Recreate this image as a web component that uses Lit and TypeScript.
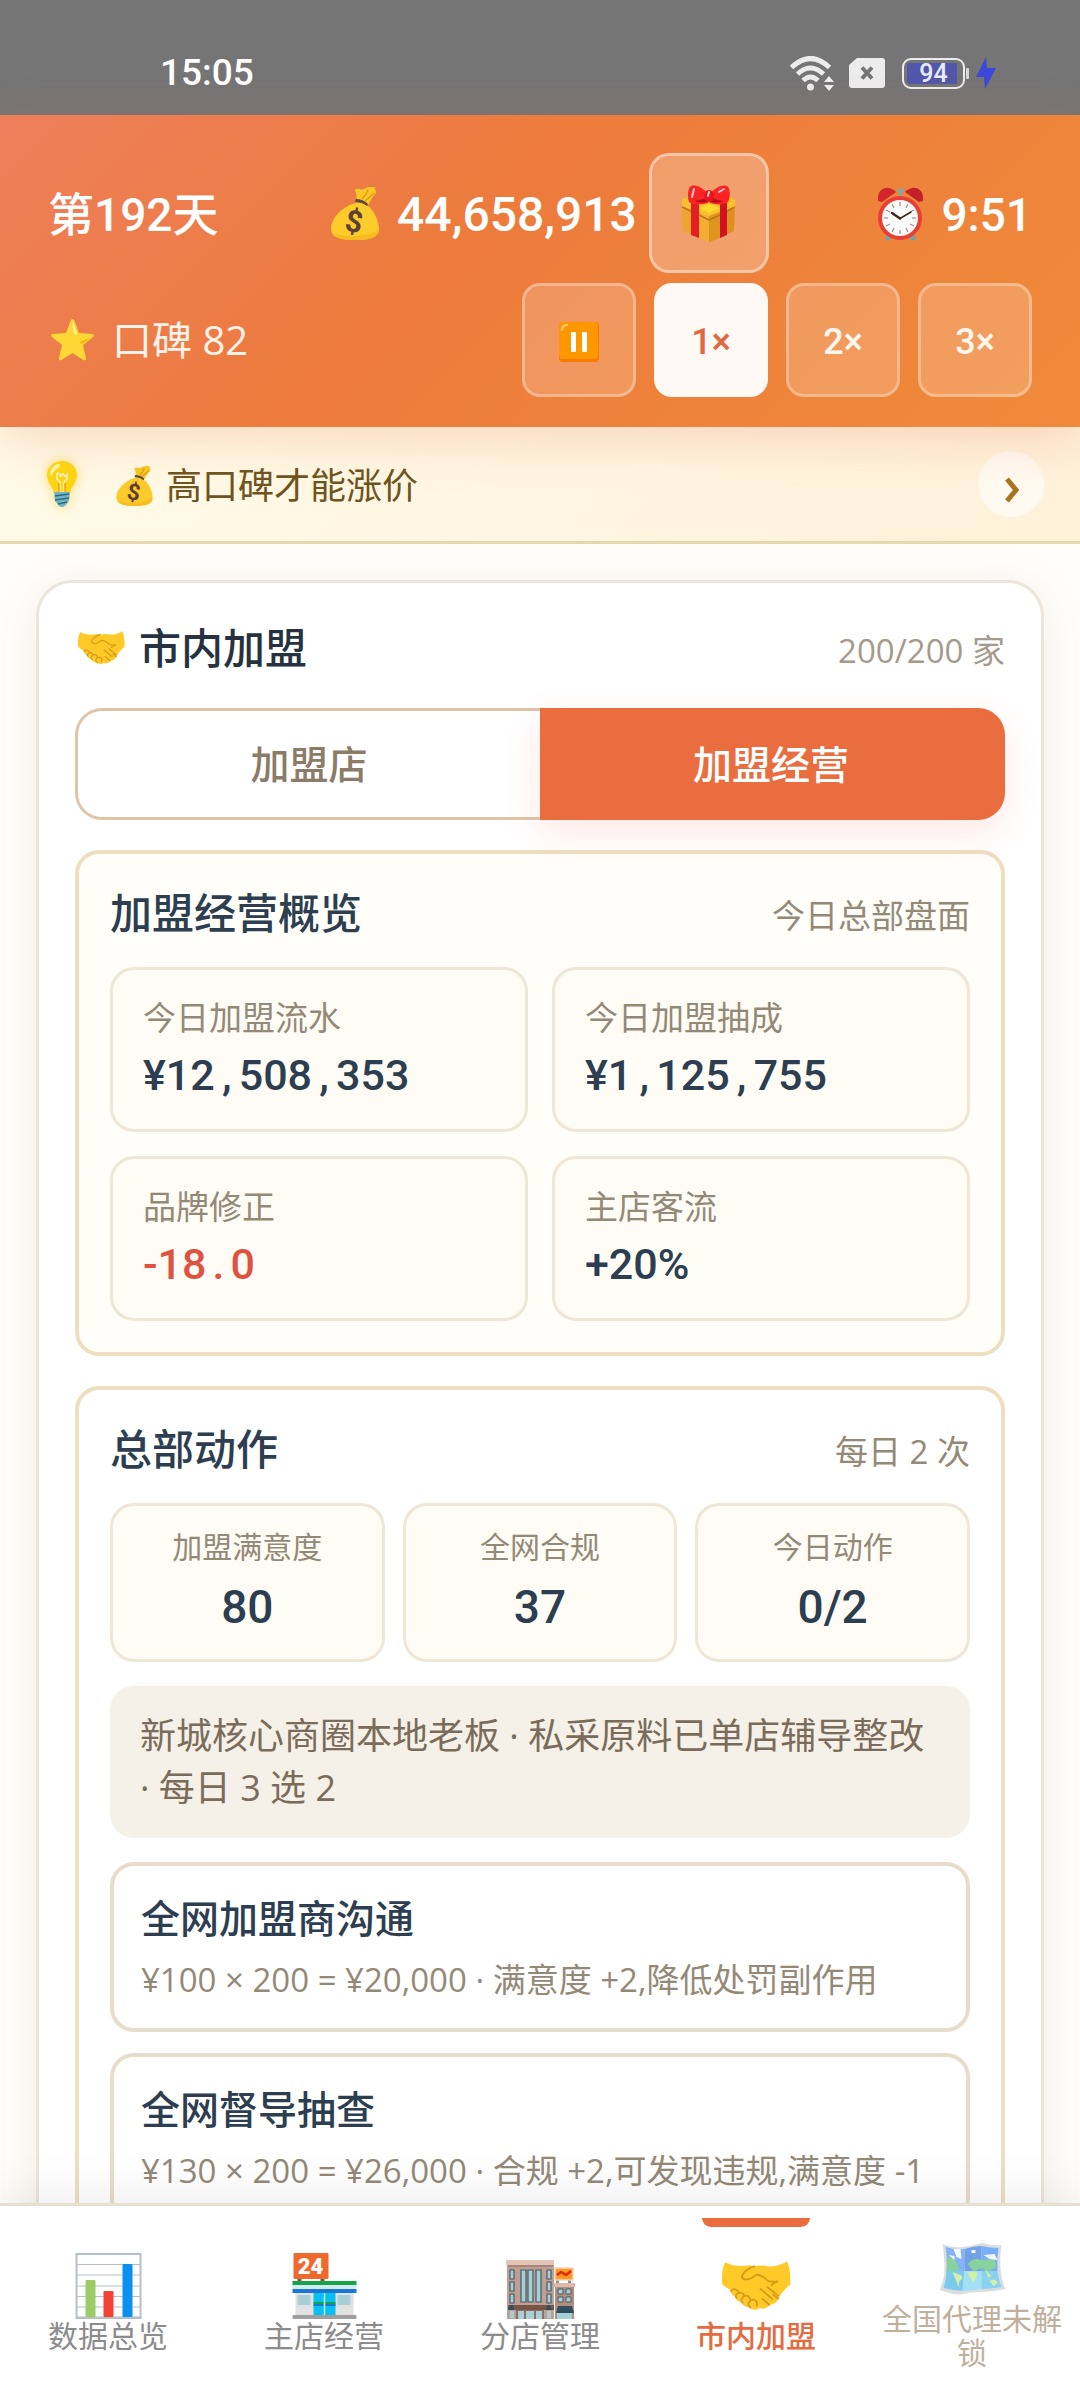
import { LitElement, html, css, TemplateResult } from "lit";
import { customElement, property, state } from "lit/decorators.js";
import { classMap } from "lit/directives/class-map.js";

/* ---------- pictograms ---------- */

const bag = html`<svg class="pic" viewBox="0 0 48 53" aria-hidden="true">
  <path d="M25 14C27 9 24 5 24 3C27 0 30 4 33 2C37-1 41 0 44 0C43 3 46 3 45 6C42 9 40 13 37 18Z" fill="#fcc624"/>
  <path d="M31 12C34 9 36 6 37 3M34 14C38 11 41 8 43 6" stroke="#d99f17" stroke-width="1.5" fill="none"/>
  <path d="M25 16C14 18 0 30 0 42C0 50 8 53 24 53C40 53 48 50 48 42C48 34 43 23 37 19C33 16 28 15 25 16Z" fill="#fdcb2a"/>
  <path d="M2 46C6 52 16 53 24 53C40 53 48 50 48 42C40 50 14 51 2 46Z" fill="#f7bd20"/>
  <path d="M25 12Q32 12 37 17L36 19Q31 15 24 15Z" fill="#5d4a3c"/>
  <text x="23" y="45" font-family="Roboto, sans-serif" font-size="30" font-weight="700" fill="#5d4037" text-anchor="middle" transform="rotate(10 23 35)">$</text>
</svg>`;

const gift = html`<svg class="pic" viewBox="0 0 53 57" aria-hidden="true">
  <path d="M0 21L27 31V57L1 46Z" fill="#eda52c"/>
  <path d="M53 21L27 31V57L52 46Z" fill="#dd911c"/>
  <path d="M17 24L27 29L38 24V53L27 57L17 53Z" fill="#f5ad33"/>
  <path d="M27 29L38 24V53L27 57Z" fill="#e0951e"/>
  <path d="M0 14L15 9H38L53 14V21L27 31L0 21Z" fill="#fbc02d"/>
  <path d="M17 23L27 19L38 23L27 28Z" fill="#fdd92b"/>
  <path d="M0 22L17 30L27 35L38 30L53 22" stroke="#b8741a" stroke-width="1.4" fill="none"/>
  <path d="M9 16L17 19V53L9 50Z" fill="#e31e26"/>
  <path d="M38 19L45 16V50L38 53Z" fill="#cf1226"/>
  <path d="M26 18C20 20 10 20 7 17C5 11 6 3 9 1C15-1 22 4 26 9Z" fill="#fb2323"/>
  <path d="M28 18C34 20 43 20 46 17C49 11 48 3 45 1C39-1 32 4 28 9Z" fill="#fb2323"/>
  <path d="M13 16C17 18 23 18 26 16V13ZM41 16C37 18 31 18 28 16V13Z" fill="#b70d1e"/>
  <ellipse cx="27" cy="11" rx="5" ry="6" fill="#e8151f"/>
  <path d="M10 12L12 4M37 7L42 4M26 11L27 7" stroke="#ffc9c9" stroke-width="2" stroke-linecap="round"/>
</svg>`;

const clock = html`<svg class="pic" viewBox="0 0 45 53" aria-hidden="true">
  <path d="M9 47L14 50L12 53H7ZM36 47L31 50L33 53H38Z" fill="#6fa3ac"/>
  <path d="M0 14C-1 4 5 0 11 1C15 2 17 4 18 5L4 15Z" fill="#d3242c"/>
  <path d="M45 14C46 4 40 0 34 1C30 2 28 4 27 5L41 15Z" fill="#c4202a"/>
  <rect x="19" y="2" width="7" height="3" rx="1" fill="#7fa8ae"/>
  <rect x="21" y="4" width="3" height="6" fill="#7fa8ae"/>
  <circle cx="22" cy="31" r="22" fill="#ea3d35"/>
  <circle cx="22" cy="31" r="18" fill="#fafafa"/>
  <path d="M22 15v4M22 43v4M6 31h4M34 31h4M14 17l2 4M30 17l-2 4M14 45l2-4M30 45l-2-4M8 23l4 2M36 23l-4 2M8 39l4-2M36 39l-4-2" stroke="#8d7b74" stroke-width="1"/>
  <path d="M14 26L22 31.500" stroke="#3e2723" stroke-width="2.400" stroke-linecap="round"/>
  <path d="M22 31.500L33 25" stroke="#3e2723" stroke-width="1.500" stroke-linecap="round"/>
</svg>`;

const star = html`<svg class="pic" viewBox="0 0 43 42" aria-hidden="true">
  <path d="M21.500 0C22.500 0 23 1 23.500 2L28 14L41 15C43 15 43.500 17 42 18L32 26L35 39C35.500 41 34 42 32.500 41L21.500 34L10.500 41C9 42 7.500 41 8 39L11 26L1 18C-.5 17 0 15 2 15L15 14L19.500 2C20 1 20.500 0 21.500 0Z" fill="#fdd835"/>
  <path d="M22 2L26 15L24 16C22 12 21 6 22 2Z" fill="#fff3a0"/>
  <path d="M29 23L40 18C36 21 32 25 30 25Z" fill="#f4b400"/>
</svg>`;

const pause = html`<svg class="pic" viewBox="0 0 40 40" aria-hidden="true">
  <rect width="40" height="40" rx="4" fill="#f57c00"/>
  <rect width="39" height="37" rx="4" fill="#ff9800"/>
  <path d="M3 8Q3 3 8 3" stroke="#ffcc80" stroke-width="2" fill="none" stroke-linecap="round"/>
  <rect x="12" y="10" width="5" height="20" rx="1" fill="#fff"/>
  <rect x="23" y="10" width="5" height="20" rx="1" fill="#fff"/>
</svg>`;

const bulb = html`<svg class="pic glow" viewBox="0 0 30 46" aria-hidden="true">
  <path d="M15 0C23 0 30 6 30 14C30 22 24 25 23 32H7C6 25 0 22 0 14C0 6 7 0 15 0Z" fill="#fdd612"/>
  <path d="M3 13C3 7 8 3 12 3C14 3 13 6 10 8C6 10 6 14 4 15Z" fill="#fff59d"/>
  <path d="M10 12V18L13 21V31M20 12V18L17 21V31M10 13Q12 11 13 14T15 14T17 14T20 13" stroke="#fff8d2" stroke-width="1.400" fill="none"/>
  <path d="M12 22V31M18 22V31" stroke="#ef8d12" stroke-width="1.200"/>
  <path d="M7 31H23L22 40L18 45Q15 47 12 45L8 40Z" fill="#6fb3c8"/>
  <path d="M8 35L22 33M8 39L22 37M11 43L20 41" stroke="#38687c" stroke-width="1.400"/>
</svg>`;

const handshake = html`<svg class="pic" viewBox="0 0 70 50" aria-hidden="true">
  <path d="M3 1C12 6 22 5 28 4C33 6 40 3 46 5C54 6 61 3 66 0C69 6 70 16 69 24C64 27 60 33 57 38C56 42 52 44 48 44C46 48 41 49 38 47C36 50 30 50 28 46C24 47 20 44 20 41C16 41 13 38 14 36C10 35 8 31 9 29C5 27 1 25 0 22C-1 14 1 6 3 1Z" fill="#ffca28"/>
  <g stroke="#d59a17" stroke-width="1.800" fill="none" stroke-linecap="round" stroke-linejoin="round">
    <path d="M33 5C28 6 21 11 20 16C23 20 29 19 34 14C39 12 43 17 47 20L56 21M50 24L56 20"/>
    <path d="M9 30C11 27 16 28 17 32C14 33 13 36 15 37M17 32C21 31 24 34 21 37C19 38 19 41 21 42M23 35C27 34 30 38 28 41C26 42 26 45 29 47M30 39C34 38 37 42 35 45"/>
    <path d="M39 28L51 38M46 26L57 35M48 44L41 38M57 38L52 34"/>
  </g>
</svg>`;

const chart = html`<svg class="pic" viewBox="0 0 66 66" aria-hidden="true">
  <rect x="1" y="1" width="64" height="64" fill="#fff" stroke="#b4c0c6" stroke-width="2"/>
  <path d="M1 11.500H65M1 22H65M1 33H65M1 43.500H65M1 54H65" stroke="#b4c0c6" stroke-width="1.200"/>
  <path d="M1 64.500H65" stroke="#b4c0c6" stroke-width="2"/>
  <rect x="10" y="27" width="10" height="37" rx="1" fill="#9ccc65"/>
  <rect x="28" y="38" width="10" height="26" rx="1" fill="#f44336"/>
  <rect x="47" y="11" width="10" height="53" rx="1" fill="#0a90ee"/>
</svg>`;

const store = html`<svg class="pic" viewBox="0 0 66 66" aria-hidden="true">
  <path d="M6 24h4v5H6zM29 24h4v5h-4z" fill="#6b5a4a"/>
  <rect x="2" y="0" width="35" height="26" rx="1" fill="#ee6a2c"/>
  <text x="19" y="21" font-family="Roboto, sans-serif" font-size="22" font-weight="900" fill="#fff" text-anchor="middle">24</text>
  <rect x="4" y="38" width="58" height="25" fill="#e1e1e1"/>
  <rect x="1" y="28" width="64" height="4" fill="#17a34a"/>
  <rect x="1" y="32" width="64" height="4" fill="#d2eaf0"/>
  <rect x="1" y="36" width="64" height="4" fill="#1976d2"/>
  <rect x="6" y="42" width="13" height="10" fill="#a9d0d6"/>
  <rect x="46" y="42" width="13" height="10" fill="#a9d0d6"/>
  <rect x="22" y="40" width="22" height="22" fill="#05c0f0"/>
  <rect x="22" y="49" width="22" height="2" fill="#17a34a"/>
  <rect x="22" y="51" width="22" height="2" fill="#1976d2"/>
  <path d="M33 40V62" stroke="#d2eaf0" stroke-width="1.500"/>
  <rect x="1" y="62" width="64" height="4" rx="1" fill="#9e9e9e"/>
</svg>`;

const building = html`<svg class="pic" viewBox="0 0 69 66" aria-hidden="true">
  <rect x="1" y="11" width="47" height="55" fill="#bf9f93"/>
  <rect x="0" y="7" width="48" height="5" fill="#e4c4b5"/>
  <path d="M2 13H47" stroke="#8d6e63"/>
  <g fill="#a5d0d8" stroke="#455a64" stroke-width="1.200">
    <path d="M4 17h4v9H4zM4 29h4v9H4zM4 41h4v9H4zM41 17h4v9h-4zM41 29h4v9h-4zM41 41h4v9h-4z"/>
    <path d="M15 17h5v32h-5zM22 17h5v32h-5zM30 17h5v32h-5z"/>
  </g>
  <rect x="2" y="52" width="46" height="5" fill="#7a5548"/>
  <rect x="10" y="57" width="28" height="9" fill="#8d6e63"/>
  <path d="M12 58h6v8h-6zM20 58h8v8h-8zM30 58h6v8h-6zM4 58h4v7H4zM41 58h4v7h-4z" fill="#a5d0d8"/>
  <path d="M2 57L4 52H7L8 57ZM40 57L41 52H44L46 57Z" fill="#2f4f5c"/>
  <rect x="49" y="34" width="19" height="32" fill="#b28d80"/>
  <rect x="48" y="30" width="21" height="4" fill="#dcb9aa"/>
  <path d="M50 26h3v4h-3zM62 26h3v4h-3z" fill="#8d8d8d"/>
  <rect x="49" y="15" width="18" height="12" fill="#ff9a1f" stroke="#ead8cc" stroke-width="1.500"/>
  <path d="M51 22L55 19L60 22L65 18" stroke="#dd2c00" stroke-width="2.500" fill="none"/>
  <path d="M52 36h5v5h-5zM60 36h5v5h-5zM52 44h5v5h-5zM60 44h5v5h-5z" fill="#a5d0d8" stroke="#455a64"/>
  <path d="M50 60L52 53H66L68 60Z" fill="#2f4f5c"/>
  <rect x="51" y="60" width="15" height="6" fill="#a5d0d8"/>
</svg>`;

const map = html`<svg class="pic" viewBox="0 0 66 52" aria-hidden="true">
  <path d="M3 1Q14 5 23 4T43 0Q53 3 62 2Q60 14 61 26T66 46Q54 49 42 49T24 51T0 47Q5 37 5 26T3 1Z" fill="#c9ced1"/>
  <path d="M6 4Q15 7 25 6V28H7Q8 15 6 4Z" fill="#4a90f0"/>
  <path d="M25 6Q34 3 42 3V28H25Z" fill="#2f76dc"/>
  <path d="M42 3Q51 5 59 5Q57 16 58 28H42Z" fill="#3a8af5"/>
  <path d="M7 28H25L23 48Q12 47 4 45Q7 37 7 28Z" fill="#3fb2e2"/>
  <path d="M25 28H42V46Q32 48 23 48Z" fill="#7ad0f5"/>
  <path d="M42 28H58Q59 37 62 44Q52 46 42 46Z" fill="#55bdea"/>
  <path d="M7 15Q13 13 16 18L20 26L16 28H8ZM28 21Q34 14 41 17L55 16L57 24L48 29L43 25L34 28Z" fill="#4fbf6d"/>
  <path d="M14 6L21 6L22 16L17 14ZM32 7h4v3h-4zM44 12L55 11L58 17L50 16ZM9 12l6 1v4z" fill="#eef4f6"/>
  <path d="M13 29L21 32Q25 35 20 38L19 44L16 36ZM28 30Q35 26 38 31L34 40L31 35ZM46 27L52 33L49 35ZM50 38Q56 34 58 40L54 43Z" fill="#b9ec7a"/>
</svg>`;

const wifi = html`<svg class="s-wifi" viewBox="0 0 45 35" aria-label="Wi-Fi">
  <g fill="none" stroke="#ececec" stroke-width="5">
    <path d="M1.500 11.500Q20.500-6.500 39.500 11.500"/>
    <path d="M7.500 18Q20.500 6 33.500 18"/>
    <path d="M13 24.500Q20.500 17.500 28 24.500"/>
  </g>
  <circle cx="20.500" cy="31" r="3.500" fill="#ececec"/>
  <path d="M39 20L44 26H34ZM39 35L44 29H34Z" fill="#ececec"/>
</svg>`;

const sim = html`<svg class="s-sim" viewBox="0 0 36 30" aria-label="SIM">
  <path d="M8 0H33Q36 0 36 3V27Q36 30 33 30H3Q0 30 0 27V7Z" fill="#ececec"/>
  <path d="M13 9.500L23 20.500M23 9.500L13 20.500" stroke="#757575" stroke-width="4"/>
</svg>`;

const bolt = html`<svg class="s-bolt" viewBox="0 0 20 32" aria-hidden="true">
  <path d="M10 0L0 20H8L9 32L20 11H11Z" fill="#3a49dc"/>
</svg>`;

const chevron = html`<svg class="chev" viewBox="0 0 16 26" aria-hidden="true">
  <path d="M2 2L11 13L2 24" fill="none" stroke="#a8751d" stroke-width="5"/>
</svg>`;

const base = css`
  * { box-sizing: border-box; }
  button {
    font: inherit;
    color: inherit;
    margin: 0;
    padding: 0;
    border: 0;
    background: none;
    cursor: pointer;
  }
  h1, h2, h3, p, dl, dt, dd { margin: 0; font-weight: inherit; font-size: inherit; }
  .pic { display: block; flex: none; }
`;

/* ---------- status bar ---------- */

@customElement("status-bar")
class StatusBar extends LitElement {
  static styles = [base, css`
    :host {
      display: flex;
      align-items: center;
      justify-content: space-between;
      padding: 45px 84px 14px 160px;
      background: #757575;
      color: #fff;
      font-family: Roboto, sans-serif;
      font-size: 37px;
      line-height: 56px;
      font-weight: 500;
    }
    .icons { display: flex; align-items: center; }
    .s-wifi { width: 45px; height: 35px; }
    .s-sim { width: 36px; height: 30px; margin-left: 14px; }
    .battery {
      display: flex;
      align-items: center;
      margin-left: 17px;
    }
    .cell {
      width: 63px;
      height: 31px;
      padding: 3px;
      border: 2px solid #ececec;
      border-radius: 9px;
    }
    .level {
      height: 21px;
      border-radius: 3px;
      background: linear-gradient(90deg, #5157ac 94%, #757575 94%);
      font-size: 25px;
      line-height: 22px;
      text-align: center;
      color: #e8eaff;
    }
    .tip { width: 3px; height: 11px; margin-left: 1px; border-radius: 1px; background: #d8d8d8; }
    .s-bolt { width: 20px; height: 32px; margin-left: 7px; }
  `];

  render() {
    return html`
      <time>15:05</time>
      <div class="icons">
        ${wifi}${sim}
        <div class="battery">
          <div class="cell"><div class="level">94</div></div>
          <div class="tip"></div>
        </div>
        ${bolt}
      </div>`;
  }
}

/* ---------- game header ---------- */

@customElement("game-header")
class GameHeader extends LitElement {
  @state() private speed = "1×";

  static styles = [base, css`
    :host {
      display: flex;
      flex-direction: column;
      gap: 10px;
      position: relative;
      z-index: 1;
      padding: 38px 48px 30px;
      background: linear-gradient(135deg, #ee7f5b 0%, #ec7b3c 42%, #f08b3a 100%);
      box-shadow: 0 12px 48px rgba(232, 108, 62, 0.24);
      color: #fff;
    }
    .row { display: flex; align-items: center; justify-content: space-between; }
    .big {
      font-family: Roboto, "Noto Sans CJK SC", sans-serif;
      font-size: 46px;
      line-height: 60px;
      font-weight: 500;
      padding-top: 3px;
    }
    .money .big { font-size: 48px; }
    .group { display: flex; align-items: center; gap: 12px; }
    .money .pic, .clock .pic { height: 53px; }
    .money .pic { width: 48px; margin: 0 6px; }
    .clock .pic { width: 45px; margin: 0 6px 0 3px; }
    .gift {
      display: grid;
      place-items: center;
      width: 120px;
      height: 120px;
      border: 3px solid rgba(255, 255, 255, 0.4);
      border-radius: 20px;
      background: rgba(255, 255, 255, 0.25);
    }
    .money .gift .pic { width: 53px; height: 57px; margin: 0; }
    .rep { gap: 18px; padding-left: 3px; font-size: 40px; line-height: 56px; color: #fff3ea; }
    .rep .pic { width: 43px; height: 42px; }
    .speeds { display: flex; gap: 18px; }
    .speed {
      display: grid;
      place-items: center;
      width: 114px;
      height: 114px;
      padding-top: 3px;
      border: 3px solid rgba(255, 255, 255, 0.3);
      border-radius: 18px;
      background: rgba(255, 255, 255, 0.18);
      font-family: Roboto, sans-serif;
      font-size: 36px;
      line-height: 48px;
      font-weight: 500;
      color: #fff6ee;
    }
    .speed.on { background: #fff9f5; border-color: #fff9f5; color: #e0683f; }
    .speed .pic { width: 40px; height: 40px; }
  `];

  render() {
    return html`
      <div class="row">
        <span class="big">第192天</span>
        <div class="group money">
          ${bag}<span class="big">44,658,913</span>
          <button class="gift" aria-label="礼物">${gift}</button>
        </div>
        <div class="group clock">${clock}<span class="big">9:51</span></div>
      </div>
      <div class="row">
        <div class="group rep">${star}<span>口碑 82</span></div>
        <div class="speeds">
          <button class="speed" aria-label="暂停">${pause}</button>
          ${["1×", "2×", "3×"].map((s) => html`
            <button
              class=${classMap({ speed: true, on: s === this.speed })}
              @click=${() => (this.speed = s)}
            >${s}</button>`)}
        </div>
      </div>`;
  }
}

/* ---------- tip strip ---------- */

@customElement("tip-strip")
class TipStrip extends LitElement {
  static styles = [base, css`
    :host {
      display: flex;
      align-items: center;
      padding: 24px 36px 24px 47px;
      border-bottom: 3px solid #e8d8ae;
      background: linear-gradient(135deg, #fffbe8, #fff1da);
      color: #6f5420;
      font-size: 36px;
      line-height: 52px;
    }
    .bulb .pic { width: 30px; height: 46px; }
    .glow { filter: drop-shadow(0 0 6px rgba(255, 200, 30, 0.6)); }
    .text { display: flex; align-items: center; gap: 13px; flex: 1; margin-left: 39px; padding-top: 3px; }
    .text .pic { width: 37px; height: 40px; }
    .next {
      display: grid;
      place-items: center;
      width: 66px;
      height: 66px;
      padding: 12px 0 0 3px;
      border-radius: 50%;
      background: rgba(255, 255, 255, 0.6);
    }
    .chev { width: 16px; height: 26px; }
  `];

  render() {
    return html`
      <span class="bulb">${bulb}</span>
      <p class="text">${bag}<span>高口碑才能涨价</span></p>
      <button class="next" aria-label="下一条">${chevron}</button>`;
  }
}

/* ---------- franchise card ---------- */

interface Metric { label: string; value: string; bad?: boolean }
interface Action { title: string; detail: string }

const overview: Metric[] = [
  { label: "今日加盟流水", value: "¥12,508,353" },
  { label: "今日加盟抽成", value: "¥1,125,755" },
  { label: "品牌修正", value: "-18.0", bad: true },
  { label: "主店客流", value: "+20%" },
];

const hqStats: Metric[] = [
  { label: "加盟满意度", value: "80" },
  { label: "全网合规", value: "37" },
  { label: "今日动作", value: "0/2" },
];

const actions: Action[] = [
  { title: "全网加盟商沟通", detail: "¥100 × 200 = ¥20,000 · 满意度 +2,降低处罚副作用" },
  { title: "全网督导抽查", detail: "¥130 × 200 = ¥26,000 · 合规 +2,可发现违规,满意度 -1" },
];

const tabular = (value: string) =>
  value.split(/([,.])/).map((part) =>
    part === "," || part === "." ? html`<span class="sep">${part}</span>` : part);

@customElement("franchise-card")
class FranchiseCard extends LitElement {
  @state() private tab = "加盟经营";

  static styles = [base, css`
    :host {
      display: block;
      padding: 36px;
      border: 3px solid #ede5d9;
      border-radius: 36px;
      background: #fff;
      box-shadow: 0 6px 48px rgba(120, 100, 60, 0.1);
    }
    .head { display: flex; align-items: center; justify-content: space-between; }
    .head h1 {
      display: flex;
      align-items: center;
      gap: 14px;
      padding-left: 3px;
      font-size: 42px;
      line-height: 58px;
      font-weight: 500;
      color: #26323f;
    }
    .head .pic { width: 47px; height: 34px; }
    .note { font-size: 33px; line-height: 48px; color: #948977; padding-top: 6px; }
    .head .note { color: #a59a8b; }
    .tabs { display: flex; margin: 31px 0 30px; }
    .tab {
      flex: 1;
      height: 112px;
      border: 3px solid #dfc5a6;
      font-size: 39px;
      line-height: 56px;
      font-weight: 500;
      color: #8b7b67;
    }
    .tab:first-child { border-radius: 27px 0 0 27px; border-right: 0; }
    .tab:last-child { border-radius: 0 27px 27px 0; border-left: 0; }
    .tab.on {
      border-color: #e96d3f;
      background: #e96d3f;
      color: #fff;
      box-shadow: 0 12px 36px rgba(232, 90, 62, 0.14);
    }
    .panel {
      padding: 31px;
      border: 4px solid #eedfc1;
      border-radius: 24px;
    }
    .panel + .panel { margin-top: 30px; }
    .cream { background: #fffef9; }
    .panel-head {
      display: flex;
      align-items: center;
      justify-content: space-between;
      margin-bottom: 26px;
    }
    .panel-head h2 { font-size: 42px; line-height: 56px; font-weight: 500; color: #2c3e50; }
    .metrics { display: grid; grid-template-columns: 1fr 1fr; gap: 24px; }
    .box { border: 3px solid #efe6d6; border-radius: 24px; background: #fffcf6; }
    .box dd {
      font-family: Roboto, "Noto Sans CJK SC", sans-serif;
      font-weight: 500;
      color: #2c3e50;
    }
    .metric { padding: 24px 30px 21px; }
    .metric dt { font-size: 33px; line-height: 48px; color: #948977; }
    .metric dd { font-size: 43px; line-height: 66px; white-space: nowrap; }
    .metric dd.bad { color: #df5140; }
    .sep { display: inline-block; width: 24px; text-align: center; }
    .stats { display: grid; grid-template-columns: repeat(3, 1fr); gap: 18px; }
    .stat { padding: 18px 12px 15px; text-align: center; }
    .stat dt { font-size: 30px; line-height: 46px; color: #948977; }
    .stat dd { font-size: 46px; line-height: 74px; }
    .brief {
      margin: 24px 0;
      padding: 24px 30px;
      border-radius: 24px;
      background: #f5f0e8;
      font-size: 36px;
      line-height: 52px;
      color: #7a6c59;
    }
    .actions { display: flex; flex-direction: column; gap: 21px; }
    .action {
      display: flex;
      flex-direction: column;
      gap: 10px;
      padding: 24px 27px;
      border: 4px solid #e8ddca;
      border-radius: 24px;
      background: #fff;
      text-align: left;
    }
    .action-title { font-size: 39px; line-height: 56px; font-weight: 500; color: #2c3e50; }
    .action-detail { font-size: 33px; line-height: 48px; color: #948977; }
  `];

  render() {
    return html`
      <div class="head">
        <h1>${handshake}<span>市内加盟</span></h1>
        <span class="note">200/200 家</span>
      </div>
      <div class="tabs" role="tablist">
        ${["加盟店", "加盟经营"].map((t) => html`
          <button
            role="tab"
            aria-selected=${t === this.tab}
            class=${classMap({ tab: true, on: t === this.tab })}
            @click=${() => (this.tab = t)}
          >${t}</button>`)}
      </div>
      <section class="panel cream">
        <div class="panel-head"><h2>加盟经营概览</h2><span class="note">今日总部盘面</span></div>
        <div class="metrics">
          ${overview.map((m) => html`
            <dl class="box metric">
              <dt>${m.label}</dt>
              <dd class=${classMap({ bad: !!m.bad })}>${tabular(m.value)}</dd>
            </dl>`)}
        </div>
      </section>
      <section class="panel">
        <div class="panel-head"><h2>总部动作</h2><span class="note">每日 2 次</span></div>
        <div class="stats">
          ${hqStats.map((m) => html`
            <dl class="box stat"><dt>${m.label}</dt><dd>${m.value}</dd></dl>`)}
        </div>
        <p class="brief">新城核心商圈本地老板 · 私采原料已单店辅导整改 · 每日 3 选 2</p>
        <div class="actions">
          ${actions.map((a) => html`
            <button class="action">
              <span class="action-title">${a.title}</span>
              <span class="action-detail">${a.detail}</span>
            </button>`)}
        </div>
      </section>`;
  }
}

/* ---------- bottom navigation ---------- */

interface NavItem { id: string; label: string; icon: TemplateResult; locked?: boolean }

const navItems: NavItem[] = [
  { id: "data", label: "数据总览", icon: chart },
  { id: "main", label: "主店经营", icon: store },
  { id: "branch", label: "分店管理", icon: building },
  { id: "city", label: "市内加盟", icon: handshake },
  { id: "nation", label: "全国代理未解锁", icon: map, locked: true },
];

@customElement("bottom-nav")
class BottomNav extends LitElement {
  @property() active = "city";

  static styles = [base, css`
    :host {
      display: block;
      position: relative;
      z-index: 1;
      border-top: 3px solid #e9dfd0;
      background: #fff;
      box-shadow: 0 -6px 48px rgba(0, 0, 0, 0.08);
    }
    nav { display: flex; padding: 12px 0; }
    .item {
      display: flex;
      flex: 1 1 0;
      flex-direction: column;
      align-items: center;
      justify-content: center;
      position: relative;
      height: 170px;
      padding: 0 6px;
      color: #8c8c8c;
      font-size: 30px;
      line-height: 34px;
      text-align: center;
      text-decoration: none;
    }
    .icon { display: grid; place-items: center; height: 66px; }
    .icon .pic { width: 69px; height: 66px; }
    .item.on { color: #e46c40; font-weight: 500; }
    .item.on::before {
      content: "";
      position: absolute;
      top: 0;
      left: 25%;
      width: 50%;
      height: 9px;
      border-radius: 0 0 9px 9px;
      background: #e96d3f;
    }
    .item.locked { color: #bfb09d; }
    .locked .pic { opacity: 0.68; height: 52px; }
  `];

  render() {
    return html`<nav>
      ${navItems.map((n) => html`
        <a
          href="#${n.id}"
          class=${classMap({ item: true, on: n.id === this.active, locked: !!n.locked })}
        ><span class="icon">${n.icon}</span><span>${n.label}</span></a>`)}
    </nav>`;
  }
}

/* ---------- page ---------- */

@customElement("app-root")
class AppRoot extends LitElement {
  static styles = [base, css`
    :host {
      display: flex;
      flex-direction: column;
      height: 100vh;
      background: #fffef9;
      font-family: "Open Sans", "Noto Sans CJK SC", sans-serif;
    }
    .body {
      flex: 1;
      min-height: 0;
      overflow-y: auto;
      scrollbar-width: none;
      padding: 36px;
    }
  `];

  render() {
    return html`
      <status-bar></status-bar>
      <game-header></game-header>
      <tip-strip></tip-strip>
      <main class="body"><franchise-card></franchise-card></main>
      <bottom-nav></bottom-nav>`;
  }
}
